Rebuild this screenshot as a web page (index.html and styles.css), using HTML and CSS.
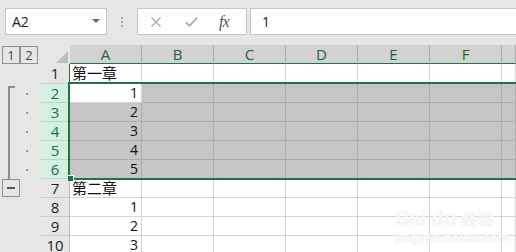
FILE: index.html
```html
<!DOCTYPE html>
<html lang="zh-CN">
  <head>
    <meta charset="UTF-8" />
    <meta name="viewport" content="width=device-width, initial-scale=1.0" />
    <title>Sheet</title>
    <link rel="stylesheet" href="styles.css">
  </head>
  <body>
    <div class="bar">
      <div class="namebox"><span>A2</span><span class="caret"></span></div>
      <div class="grip"><i></i><i></i><i></i></div>
      <div class="fxbox">
        <svg class="cancel" width="10" height="10" viewBox="0 0 10 10"><path d="M0.5 0.5L9.5 9.5M9.5 0.5L0.5 9.5" stroke="#a9a9a9" stroke-width="1.3" fill="none"/></svg>
        <svg class="enter" width="13" height="10" viewBox="0 0 13 10"><path d="M0.8 5.2L4.5 8.8L12.2 0.8" stroke="#b4b4b4" stroke-width="2" fill="none"/></svg>
        <span class="fx">fx</span>
      </div>
      <div class="formula">1</div>
    </div>

    <div class="sheet">
      <!-- header -->
      <div class="lv"><span class="lb">1</span><span class="lb">2</span></div>
      <div class="corner"><span></span></div>
      <div class="ch">A</div>
      <div class="ch">B</div>
      <div class="ch">C</div>
      <div class="ch">D</div>
      <div class="ch">E</div>
      <div class="ch">F</div>
      <div class="ch"></div>

      <!-- row 1 -->
      <div class="g"></div>
      <div class="rh first">1</div>
      <div class="c t">第一章</div>
      <div class="c"></div><div class="c"></div><div class="c"></div><div class="c"></div><div class="c"></div><div class="c"></div>

      <!-- rows 2-6 (grouped, selected) -->
      <div class="g"><span class="br top"></span><span class="dot"></span></div>
      <div class="rh s">2</div>
      <div class="c">1</div>
      <div class="c s"></div><div class="c s"></div><div class="c s"></div><div class="c s"></div><div class="c s"></div><div class="c s"></div>

      <div class="g"><span class="br"></span><span class="dot"></span></div>
      <div class="rh s">3</div>
      <div class="c s">2</div>
      <div class="c s"></div><div class="c s"></div><div class="c s"></div><div class="c s"></div><div class="c s"></div><div class="c s"></div>

      <div class="g"><span class="br"></span><span class="dot"></span></div>
      <div class="rh s">4</div>
      <div class="c s">3</div>
      <div class="c s"></div><div class="c s"></div><div class="c s"></div><div class="c s"></div><div class="c s"></div><div class="c s"></div>

      <div class="g"><span class="br"></span><span class="dot"></span></div>
      <div class="rh s">5</div>
      <div class="c s">4</div>
      <div class="c s"></div><div class="c s"></div><div class="c s"></div><div class="c s"></div><div class="c s"></div><div class="c s"></div>

      <div class="g"><span class="br"></span><span class="dot"></span></div>
      <div class="rh s">6</div>
      <div class="c s">5</div>
      <div class="c s"></div><div class="c s"></div><div class="c s"></div><div class="c s"></div><div class="c s"></div><div class="c s"></div>

      <!-- row 7 -->
      <div class="g"><span class="mb"><i></i></span></div>
      <div class="rh">7</div>
      <div class="c t">第二章</div>
      <div class="c"></div><div class="c"></div><div class="c"></div><div class="c"></div><div class="c"></div><div class="c"></div>

      <div class="g"></div>
      <div class="rh">8</div>
      <div class="c">1</div>
      <div class="c"></div><div class="c"></div><div class="c"></div><div class="c"></div><div class="c"></div><div class="c"></div>

      <div class="g"></div>
      <div class="rh">9</div>
      <div class="c">2</div>
      <div class="c"></div><div class="c"></div><div class="c"></div><div class="c"></div><div class="c"></div><div class="c"></div>

      <div class="g"></div>
      <div class="rh">10</div>
      <div class="c">3</div>
      <div class="c"></div><div class="c"></div><div class="c"></div><div class="c"></div><div class="c"></div><div class="c"></div>

      <div class="sel"><span class="handle"></span></div>
      <div class="wm"><span class="wm-big">Bai du <em>经验</em></span><span class="wm-url">jingyan.baidu.com</span></div>
    </div>
  </body>
</html>
```

FILE: styles.css
```css
body {
  margin: 0;
  background: #e6e6e6;
  font-family: "Open Sans", "Noto Sans CJK SC", sans-serif;
  overflow: hidden;
}
.bar {
  display: flex;
  height: 45px;
  box-sizing: border-box;
  padding: 8px 0 0 5px;
}
.namebox {
  display: flex;
  align-items: center;
  width: 102px;
  height: 27px;
  box-sizing: border-box;
  background: #fff;
  border: 1px solid #c6c6c6;
  padding-left: 6px;
  font-size: 14px;
  color: #222;
}
.caret {
  margin-left: auto;
  margin-right: 6px;
  margin-top: -2px;
  border-left: 4px solid transparent;
  border-right: 4px solid transparent;
  border-top: 4px solid #6b6b6b;
}
.grip {
  width: 30px;
  height: 27px;
  display: flex;
  flex-direction: column;
  align-items: center;
  justify-content: center;
  gap: 2px;
}
.grip i {
  width: 2px;
  height: 2px;
  background: #a8a8a8;
}
.fxbox {
  display: flex;
  align-items: center;
  width: 110px;
  height: 27px;
  box-sizing: border-box;
  background: #fff;
  border: 1px solid #c6c6c6;
  padding-left: 13px;
}
.enter {
  margin-left: 24px;
}
.fx {
  margin-left: 21px;
  font-family: "Liberation Serif", serif;
  font-style: italic;
  font-size: 16px;
  letter-spacing: -1px;
  color: #555;
  line-height: 1;
}
.formula {
  flex: 1;
  margin-left: 3px;
  margin-right: -2px;
  height: 27px;
  box-sizing: border-box;
  background: #fff;
  border: 1px solid #c6c6c6;
  padding-left: 11px;
  font-size: 14px;
  line-height: 25px;
  color: #222;
}

.sheet {
  display: grid;
  grid-template-columns: 41px 29px repeat(6, 72px) 1fr;
  grid-template-rows: 19px 20px repeat(9, 19px);
  position: relative;
  overflow: hidden;
  height: 207px;
  color: #111;
}
.lv {
  display: flex;
  padding: 1px 0 0 2px;
}
.lb {
  width: 18px;
  height: 18px;
  box-sizing: border-box;
  border: 1px solid #8f8f8f;
  font-size: 13px;
  line-height: 16px;
  text-align: center;
  color: #444;
}
.corner {
  display: flex;
  align-items: flex-end;
  justify-content: flex-end;
  padding: 0 2px 1px 0;
}
.corner span {
  border-left: 12px solid transparent;
  border-bottom: 12px solid #bdbdbd;
}
.ch {
  background: #d2d2d2;
  border-right: 1px solid #ababab;
  border-bottom: 1px solid #217346;
  text-align: center;
  font-size: 15px;
  line-height: 18px;
  color: #245e3d;
}
.rh {
  background: #e6e6e6;
  border-right: 1px solid #bdbdbd;
  border-bottom: 1px solid #c9c9c9;
  text-align: center;
  font-size: 15px;
  line-height: 18px;
  color: #222;
}
.rh.first {
  line-height: 19px;
  border-right-color: #217346;
}
.rh.s {
  background: #d3f0e0;
  color: #217346;
  border-bottom-color: #b5d9c4;
}
.c {
  background: #fff;
  border-right: 1px solid #d4d4d4;
  border-bottom: 1px solid #d4d4d4;
  padding: 0 3px;
  text-align: right;
  font-size: 14px;
  line-height: 18px;
}
.c.s {
  background: #c6c6c6;
  border-color: #ababab;
}
.c.t {
  text-align: left;
  padding-left: 2px;
  font-family: "Noto Sans CJK SC", sans-serif;
  font-size: 15px;
}
.g {
  display: flex;
}
.br {
  margin-left: 8px;
  width: 5px;
  border-left: 2px solid #8e8e8e;
}
.br.top {
  margin-top: 2px;
  border-top: 2px solid #8e8e8e;
}
.dot {
  width: 2px;
  height: 2px;
  background: #9a9a9a;
  margin-left: 11px;
  align-self: center;
}
.mb {
  display: flex;
  align-items: center;
  justify-content: center;
  margin-left: 2px;
  width: 18px;
  height: 18px;
  box-sizing: border-box;
  border: 1px solid #8f8f8f;
}
.mb i {
  width: 8px;
  height: 2px;
  background: #555;
}
.sel {
  position: absolute;
  left: 68px;
  top: 37px;
  width: 600px;
  height: 98px;
  box-sizing: border-box;
  border: 2px solid #217346;
}
.handle {
  position: absolute;
  left: -2px;
  bottom: -3px;
  width: 5px;
  height: 5px;
  background: #217346;
  border-top: 1px solid #fff;
  border-right: 1px solid #fff;
}
.wm {
  position: absolute;
  left: 395px;
  top: 161px;
  display: flex;
  flex-direction: column;
  color: rgba(255, 255, 255, 0.8);
  text-shadow: 0 0 1px #dcdcdc;
  font-family: "Liberation Sans", sans-serif;
  font-weight: bold;
}
.wm-big {
  font-size: 20px;
  line-height: 24px;
}
.wm-big em {
  font-style: normal;
  font-family: "Noto Sans CJK SC", sans-serif;
  font-size: 16px;
}
.wm-url {
  font-size: 13px;
  line-height: 16px;
}
```
